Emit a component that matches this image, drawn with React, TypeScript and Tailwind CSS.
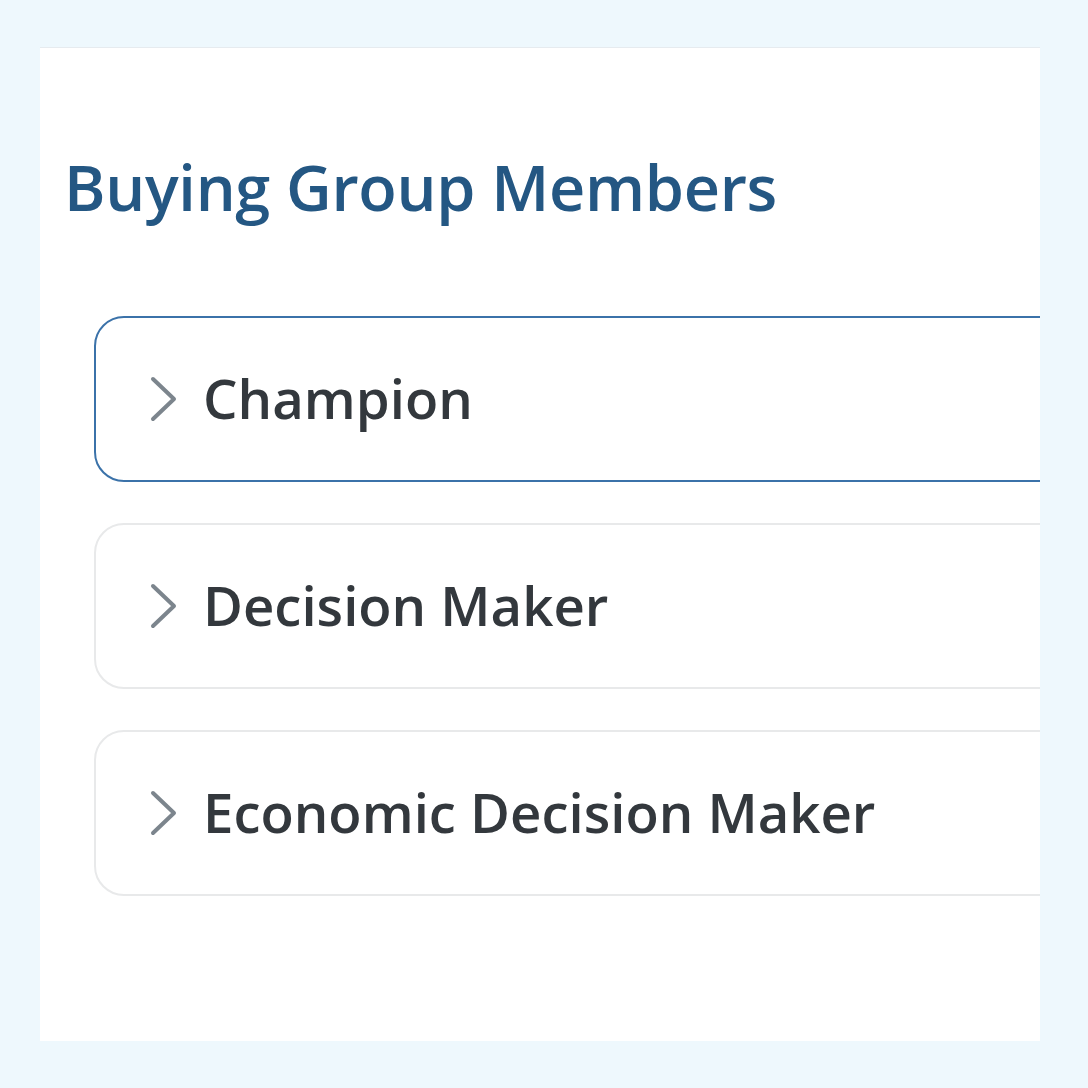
const members = [
  { label: 'Champion', active: true },
  { label: 'Decision Maker', active: false },
  { label: 'Economic Decision Maker', active: false },
]

function Chevron() {
  return (
    <svg width="30" height="46" viewBox="0 0 30 46" fill="none" className="shrink-0">
      <polyline
        points="4,3 25,23 4,43"
        stroke="#7c858d"
        strokeWidth="4"
        strokeLinecap="round"
        strokeLinejoin="round"
      />
    </svg>
  )
}

export default function App() {
  return (
    <div className="min-h-[1088px] w-[1088px] bg-[#eef8fd] pt-[47px] pl-[40px] font-['Open_Sans',sans-serif]">
      <div className="h-[994px] w-[1000px] overflow-hidden border-t border-[#e6ebef] bg-white pt-[101px] pl-[24px]">
        <h2 className="text-[63px] font-semibold leading-[76px] tracking-[-0.3px] text-[#245783]">
          Buying Group Members
        </h2>

        <div className="mt-[91px] ml-[30px] mr-[-60px] flex flex-col gap-[41px]">
          {members.map((m) => (
            <div
              key={m.label}
              className={
                m.active
                  ? 'flex h-[166px] items-center rounded-[30px] border-2 border-[#3b72a9] pl-[53px]'
                  : 'flex h-[166px] items-center rounded-[30px] border-2 border-[#e8e9ea] pl-[53px]'
              }
            >
              <Chevron />
              <span className="ml-[24px] text-[54.5px] font-semibold text-[#33383d]">{m.label}</span>
            </div>
          ))}
        </div>
      </div>
    </div>
  )
}
